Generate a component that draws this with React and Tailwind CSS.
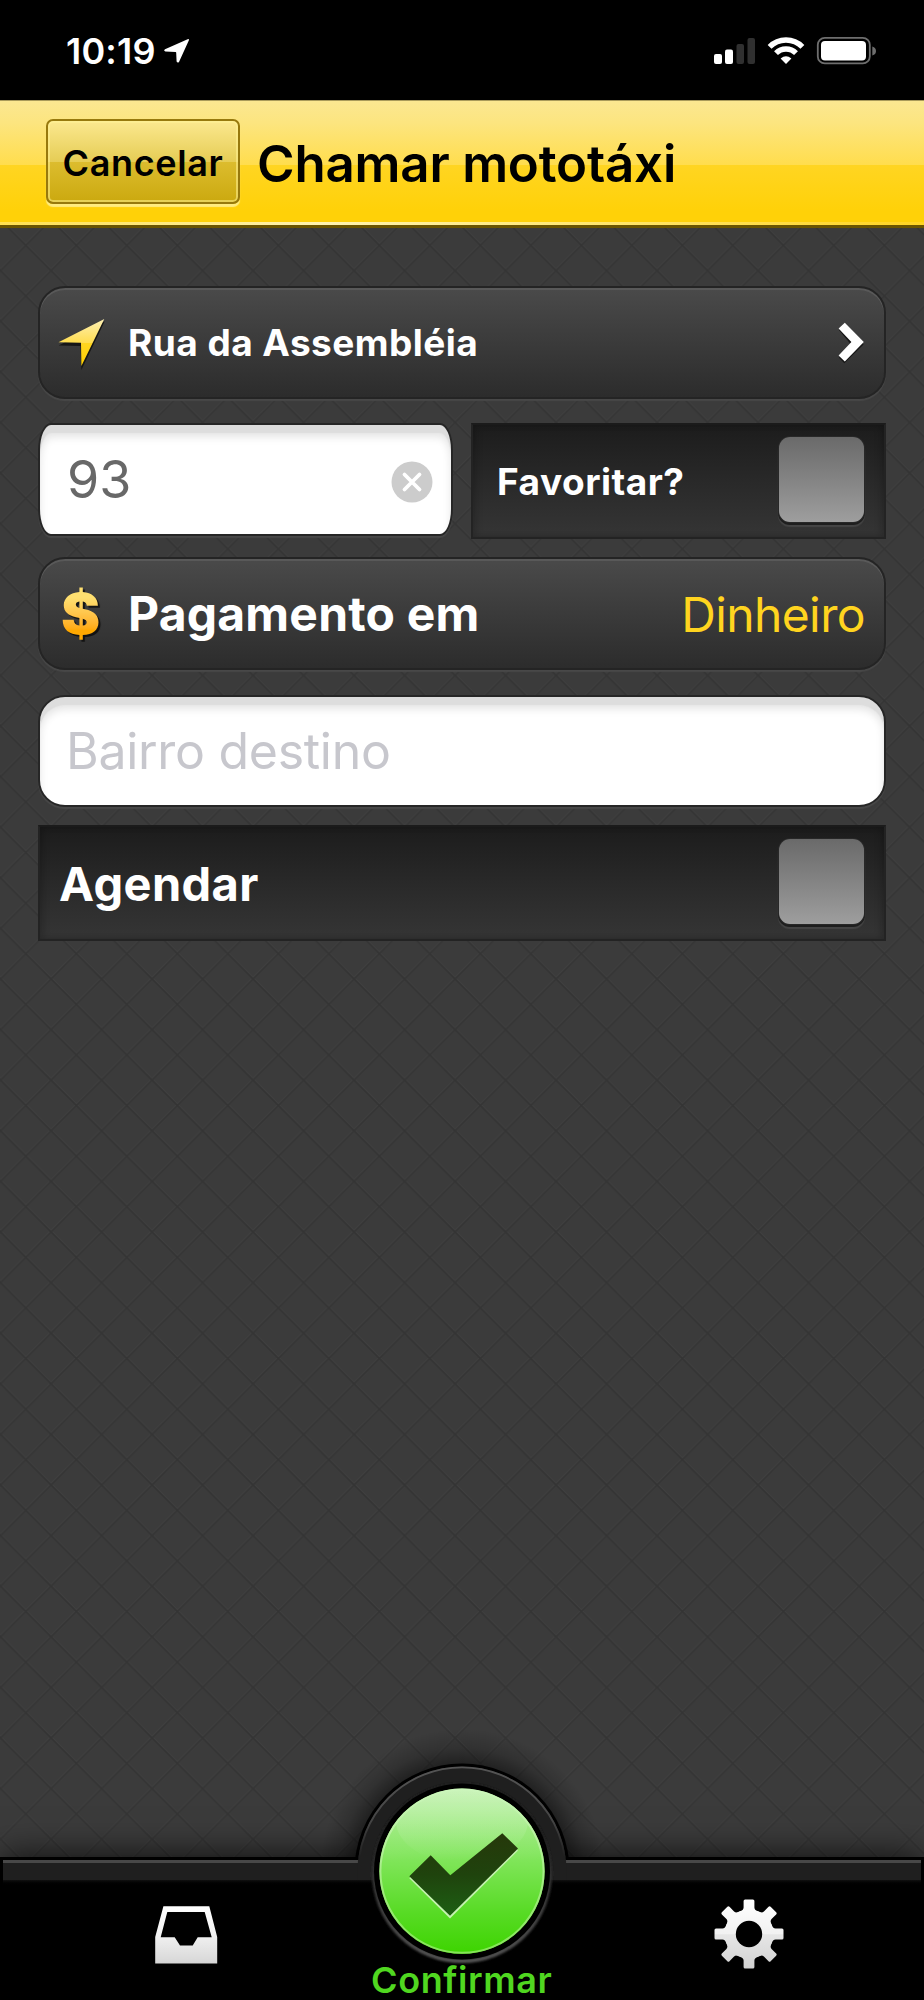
function LocationGlyph() {
  return (
    <svg viewBox="163 38 27 26" className="ml-[7px] h-[26px] w-[27px]" fill="#fff">
      <path d="M188.2 39 L165 49.2 Q163.2 50.6 165.4 51.6 L175.6 52 Q176.2 52 176.2 52.8 L176.6 61.6 Q177.6 63.4 179 62 L188.9 40.2 Q189.2 38.8 188.2 39 Z" />
    </svg>
  );
}

function StatusIcons() {
  return (
    <svg viewBox="712 36 166 30" className="h-[30px] w-[166px]">
      <rect x="714" y="54" width="8" height="10" rx="2" fill="#fff" />
      <rect x="725" y="49.5" width="8" height="14.5" rx="2" fill="#fff" />
      <rect x="736.5" y="44" width="7.5" height="20" rx="2" fill="#303030" />
      <rect x="747.5" y="38" width="7.5" height="26" rx="2" fill="#303030" />
      <g fill="none" stroke="#fff" strokeWidth="5.4">
        <path d="M769.6 46.8 A23 23 0 0 1 802.4 46.8" />
        <path d="M776 53.2 A14 14 0 0 1 796 53.2" />
      </g>
      <path d="M786 64 L780.6 58.6 Q786 53.8 791.4 58.6 Z" fill="#fff" />
      <rect x="817.8" y="37.8" width="52" height="25.6" rx="7" fill="none" stroke="#6e6e6e" strokeWidth="1.8" />
      <rect x="821" y="41" width="45" height="19.5" rx="4" fill="#fff" />
      <path d="M872.3 46.5 Q876 47.5 876 51 T872.3 55.5 Z" fill="#6e6e6e" />
    </svg>
  );
}

function Backdrop() {
  return (
    <svg className="absolute inset-0 h-full w-full">
      <defs>
        <pattern id="quilt" width="50.5" height="50.6" patternUnits="userSpaceOnUse" x="0.6" y="42.6">
          <g fill="none">
            <path d="M-2 51.1 L51.1 -2" stroke="#404040" strokeWidth="1.4" />
            <path d="M-0.5 -2 L52.5 51" stroke="#404040" strokeWidth="1.4" />
            <path d="M-2 52.6 L52.5 -2 M-2 2 L2 -2 M48.5 52.6 L52.5 48.6" stroke="#353535" strokeWidth="1.6" />
            <path d="M-2 -2 L52.5 52.6 M-2 48.6 L2 52.6 M48.5 -2 L52.5 2" stroke="#343434" strokeWidth="1.8" />
          </g>
        </pattern>
      </defs>
      <rect width="100%" height="100%" fill="#3b3b3b" />
      <rect width="100%" height="100%" fill="url(#quilt)" />
    </svg>
  );
}

function YellowArrow() {
  return (
    <svg viewBox="56 314 52 56" className="h-[56px] w-[52px] shrink-0">
      <defs>
        <linearGradient id="arrow" x1="0" y1="318" x2="0" y2="365" gradientUnits="userSpaceOnUse">
          <stop offset="0" stopColor="#fdf0b4" />
          <stop offset="0.5" stopColor="#ffdd50" />
          <stop offset="0.52" stopColor="#ffd520" />
          <stop offset="1" stopColor="#ffd000" />
        </linearGradient>
      </defs>
      <path d="M104.6 320.5 L58.7 344.5 L80.5 345 L81.4 369 Z" fill="#161616" />
      <path d="M104.3 318 L58.5 341.2 L81 341.8 L81.4 365 Z" fill="url(#arrow)" />
    </svg>
  );
}

function Chevron() {
  return (
    <svg viewBox="836 320 30 44" className="h-[44px] w-[30px]">
      <path d="M844.3 324.3 L863.6 343.5 L844.3 362.3 L839 356.7 L851 343.5 L839 329.3 Z" fill="#161616" />
      <path d="M844.8 321.8 L863.8 341 L844.8 360.6 L838.6 354.6 L851.4 341 L838.6 327.6 Z" fill="#fff" />
    </svg>
  );
}

function ClearButton() {
  return (
    <button className="mt-[5px] shrink-0" aria-label="Limpar">
      <svg viewBox="0 0 42 42" className="h-[42px] w-[42px]">
        <circle cx="21" cy="21" r="20.5" fill="#cccccc" />
        <path d="M13.5 13.5 L28.5 28.5 M28.5 13.5 L13.5 28.5" stroke="#fff" strokeWidth="3.8" strokeLinecap="round" />
      </svg>
    </button>
  );
}

function CheckBox() {
  return (
    <button
      role="checkbox"
      aria-checked="false"
      className="-mt-[3px] h-[85px] w-[85px] rounded-[11px] bg-linear-to-b from-[#6a6a6a] to-[#9e9e9e] shadow-[0_0_0_1px_#282828,0_2px_0_1px_#1e1e1e,0_4px_1px_1px_#454545]"
    />
  );
}

const raised =
  "flex h-[113px] items-center rounded-[27px] border-2 border-[#242424] bg-linear-to-b from-[#4a4a4a] to-[#2c2c2c] shadow-[inset_0_2px_0_#595959,0_2px_1px_#484848]";
const inset =
  "flex items-center border-2 border-[#232323] border-t-[#1b1b1b] bg-linear-to-b from-[#1c1c1c] via-[#292929] to-[#353535] shadow-[inset_4px_0_6px_rgba(0,0,0,0.15),inset_-4px_0_6px_rgba(0,0,0,0.15)]";
const field =
  "flex border-2 border-[#262626] bg-white shadow-[inset_0_8px_1px_#dddddd,inset_0_12px_8px_#e4e4e4,0_2px_1px_#484848]";

function InboxIcon() {
  return (
    <svg viewBox="154 1905 64 60" className="h-[60px] w-[64px]">
      <defs>
        <linearGradient id="inbox" x1="0" y1="1906" x2="0" y2="1964" gradientUnits="userSpaceOnUse">
          <stop offset="0" stopColor="#ffffff" />
          <stop offset="0.45" stopColor="#f4f4f4" />
          <stop offset="1" stopColor="#d6d6d6" />
        </linearGradient>
      </defs>
      <path
        fill="url(#inbox)"
        fillRule="evenodd"
        d="M163.4 1906.2 H209.3 L217.2 1937 V1963.6 H155.2 V1937 Z M167.3 1912 L160.7 1937.3 H174.7 L180 1945.5 H192.7 L197.7 1937.3 H211.7 L204.7 1912 Z"
      />
    </svg>
  );
}

function GearIcon() {
  return (
    <svg viewBox="-35 -35 70 70" className="h-[70px] w-[70px]">
      <defs>
        <linearGradient id="gear" x1="0" y1="0" x2="0" y2="1">
          <stop offset="0" stopColor="#ffffff" />
          <stop offset="0.5" stopColor="#f1f1f1" />
          <stop offset="0.51" stopColor="#e6e6e6" />
          <stop offset="1" stopColor="#d2d2d2" />
        </linearGradient>
        <mask id="gearMask" maskUnits="userSpaceOnUse" x="-35" y="-35" width="70" height="70">
          <g fill="#fff">
            <circle r="24.6" />
            {[0, 45, 90, 135, 180, 225, 270, 315].map((a) => (
              <path key={a} transform={`rotate(${a})`} d="M-9.5 -22 Q-5.4 -24 -5.4 -26.5 V-33 Q-5.4 -34.5 -3.9 -34.5 H3.9 Q5.4 -34.5 5.4 -33 V-26.5 Q5.4 -24 9.5 -22 Z" />
            ))}
          </g>
          <circle r="13.2" fill="#000" />
        </mask>
      </defs>
      <rect x="-35" y="-35" width="70" height="70" fill="url(#gear)" mask="url(#gearMask)" />
    </svg>
  );
}

function ConfirmBadge() {
  return (
    <svg viewBox="312 1720 300 245" className="h-[245px] w-[300px]">
      <defs>
        <radialGradient id="halo" cx="462" cy="1871" r="150" gradientUnits="userSpaceOnUse">
          <stop offset="0.71" stopColor="#000" stopOpacity="0.45" />
          <stop offset="0.82" stopColor="#000" stopOpacity="0.17" />
          <stop offset="0.95" stopColor="#000" stopOpacity="0" />
        </radialGradient>
        <linearGradient id="green" x1="0" y1="1788" x2="0" y2="1954" gradientUnits="userSpaceOnUse">
          <stop offset="0" stopColor="#a4eb88" />
          <stop offset="0.4" stopColor="#84e65f" />
          <stop offset="0.75" stopColor="#58db25" />
          <stop offset="1" stopColor="#3dd400" />
        </linearGradient>
        <linearGradient id="gloss" x1="0" y1="1788" x2="0" y2="1860" gradientUnits="userSpaceOnUse">
          <stop offset="0" stopColor="#fff" stopOpacity="0.25" />
          <stop offset="1" stopColor="#fff" stopOpacity="0" />
        </linearGradient>
        <linearGradient id="rim" x1="0" y1="1788" x2="0" y2="1954" gradientUnits="userSpaceOnUse">
          <stop offset="0" stopColor="#cdf6bd" />
          <stop offset="1" stopColor="#84e357" />
        </linearGradient>
        <linearGradient id="edge" x1="0" y1="1766" x2="0" y2="1857" gradientUnits="userSpaceOnUse">
          <stop offset="0" stopColor="#555" />
          <stop offset="0.6" stopColor="#454545" />
          <stop offset="1" stopColor="#1f1f1f" />
        </linearGradient>
        <linearGradient id="ring" x1="0" y1="1782" x2="0" y2="1961" gradientUnits="userSpaceOnUse">
          <stop offset="0.3" stopColor="#1f1f1f" />
          <stop offset="0.6" stopColor="#363636" />
          <stop offset="1" stopColor="#555" />
        </linearGradient>
        <linearGradient id="tick" x1="0" y1="1833" x2="0" y2="1916" gradientUnits="userSpaceOnUse">
          <stop offset="0" stopColor="#26380a" />
          <stop offset="0.5" stopColor="#1f430d" />
          <stop offset="1" stopColor="#1d6013" />
        </linearGradient>
        <clipPath id="above"><rect x="300" y="1700" width="324" height="157.5" /></clipPath>
        <clipPath id="band"><rect x="300" y="1700" width="324" height="180" /></clipPath>
        <clipPath id="disc"><circle cx="462" cy="1871.2" r="82" /></clipPath>
        <filter id="soft" x="-20%" y="-20%" width="140%" height="140%"><feGaussianBlur stdDeviation="1.3" /></filter>
      </defs>
      <g clipPath="url(#above)">
        <circle cx="462" cy="1871" r="150" fill="url(#halo)" />
        <circle cx="462" cy="1871" r="107.5" fill="#000" />
      </g>
      <g clipPath="url(#band)">
        <circle cx="462" cy="1871" r="104.5" fill="#1f1f1f" />
      </g>
      <g clipPath="url(#above)">
        <circle cx="462" cy="1871" r="103.6" fill="none" stroke="url(#edge)" strokeWidth="1.8" />
      </g>
      <circle cx="462" cy="1873" r="88" fill="none" stroke="url(#ring)" strokeWidth="4" filter="url(#soft)" />
      <circle cx="462" cy="1871.5" r="88" fill="#000" />
      <circle cx="462" cy="1871.2" r="82.6" fill="url(#green)" />
      <g clipPath="url(#disc)">
        <ellipse cx="462" cy="1821" rx="66" ry="42" fill="url(#gloss)" />
        <circle cx="462" cy="1871.2" r="82" fill="url(#gloss)" />
      </g>
      <circle cx="462" cy="1871.2" r="81.6" fill="none" stroke="url(#rim)" strokeWidth="2" />
      <path d="M430.7 1857.3 L450.3 1877.3 L502.3 1835.3 L518 1850.6 L450 1918.6 L409.3 1878.3 Z" fill="#c5f2b0" />
      <path d="M430.7 1855.3 L450.3 1875.3 L502.3 1833.3 L518 1848.6 L450 1915.7 L409.3 1876.3 Z" fill="url(#tick)" />
    </svg>
  );
}

export default function App() {
  return (
    <div className="flex h-[2000px] w-[924px] flex-col overflow-hidden bg-black font-['Inter',sans-serif] text-white">
      <div className="flex h-[100px] shrink-0 items-center justify-between pt-[2px] pr-[46px] pl-[66px]">
        <div className="flex items-center">
          <span className="text-[36px] leading-none font-semibold tracking-[0.2px]">10:19</span>
          <LocationGlyph />
        </div>
        <StatusIcons />
      </div>

      <header className="flex h-[128px] shrink-0 flex-col border-t border-[#a99a5a] bg-[#ffd20c]">
        <div className="flex h-[121px] items-start bg-[linear-gradient(#fbe791_0,#fce57f_22px,#ffdd4d_64px,#ffd522_64px,#ffd108_110px)] pt-[18px] pl-[46px]">
          <button className="flex h-[85px] w-[194px] items-center justify-center rounded-[7px] border-2 border-[#97790d] bg-[linear-gradient(#fbe88f,#e6cd55_50%,#dcbc2e_51%,#cba90f)] pt-[2px] text-[36px] leading-none font-semibold tracking-[0.63px] text-black shadow-[inset_0_0_0_2px_rgba(255,243,150,0.55),0_3px_1px_#ffec80]">
            Cancelar
          </button>
          <h1 className="mt-[19px] ml-[17px] text-[51px] leading-[52px] font-semibold tracking-[-0.18px] text-black">Chamar mototáxi</h1>
        </div>
        <div className="h-[3px] bg-[linear-gradient(90deg,#ffe050,#fff3b0_35%,#ffe97a_60%,#ffd422)]" />
        <div className="h-[3px] bg-[#6b5500]" />
      </header>

      <main className="relative min-h-0 flex-1">
        <Backdrop />
        <div className="relative flex flex-col px-[38px] pt-[58px]">
          <div className={raised}>
            <div className="flex w-[88px] items-center pl-[16px]">
              <YellowArrow />
            </div>
            <span className="flex-1 text-[37px] leading-none font-bold tracking-[0.45px]">Rua da Assembléia</span>
            <div className="mr-[18px]">
              <Chevron />
            </div>
          </div>

          <div className="mt-[24px] flex h-[116px] items-start justify-between">
            <div className={`${field} h-[113px] w-[415px] items-center rounded-[13px/27px] pr-[18px] pl-[27px]`}>
              <input
                defaultValue="93"
                className="h-[70px] min-w-0 flex-1 bg-transparent text-[52px] leading-none text-[#686868] outline-none"
              />
              <ClearButton />
            </div>
            <div className={`${inset} h-[116px] w-[415px] justify-between pr-[20px] pl-[24px]`}>
              <span className="text-[37px] leading-none font-bold tracking-[0.5px]">Favoritar?</span>
              <CheckBox />
            </div>
          </div>

          <div className={`${raised} mt-[18px]`}>
            <div className="flex w-[88px] items-center pl-[21px]">
              <span className="origin-left scale-x-105 bg-linear-to-b from-[#ffe070] from-25% to-[#ffa800] to-75% bg-clip-text text-[56px] leading-[66px] font-black text-transparent drop-shadow-[2px_2px_0_rgba(0,0,0,0.65)]">$</span>
            </div>
            <span className="flex-1 text-[48px] leading-none font-bold tracking-[0.2px]">Pagamento em</span>
            <span className="mt-[2px] mr-[19px] text-[48px] leading-none tracking-[-0.6px] text-[#ffd41f]">Dinheiro</span>
          </div>

          <div className={`${field} mt-[25px] h-[112px] items-center rounded-[27px] px-[26px]`}>
            <input
              placeholder="Bairro destino"
              className="h-[70px] w-full bg-transparent text-[50px] leading-none tracking-[-0.29px] outline-none placeholder:text-[#c7c7cd]"
            />
          </div>

          <div className={`${inset} mt-[18px] h-[116px] justify-between pr-[20px] pl-[19px]`}>
            <span className="text-[47px] leading-none font-bold tracking-[0.4px]">Agendar</span>
            <CheckBox />
          </div>
        </div>
      </main>

      <footer className="relative h-[143px] shrink-0 bg-black shadow-[0_0_34px_rgba(0,0,0,0.8)]">
        <div className="mx-[3px] flex flex-col pt-[3px]">
          <div className="h-[3px] bg-[#484848]" />
          <div className="h-[17px] bg-[#1f1f1f]" />
          <div className="h-[6px] bg-linear-to-b from-[#111] to-black" />
        </div>
        <div className="absolute -top-[137px] left-[312px]">
          <ConfirmBadge />
        </div>
        <nav className="flex items-start">
          <button className="mt-[19px] ml-[154px]" aria-label="Caixa de entrada">
            <InboxIcon />
          </button>
          <span className="relative mt-[77px] ml-[153px] h-[34px] w-[185px] text-[36px] leading-[34px] font-semibold tracking-[0.6px] text-[#50d720]">Confirmar</span>
          <button className="mt-[13px] ml-[157.5px]" aria-label="Ajustes">
            <GearIcon />
          </button>
        </nav>
      </footer>
    </div>
  );
}
